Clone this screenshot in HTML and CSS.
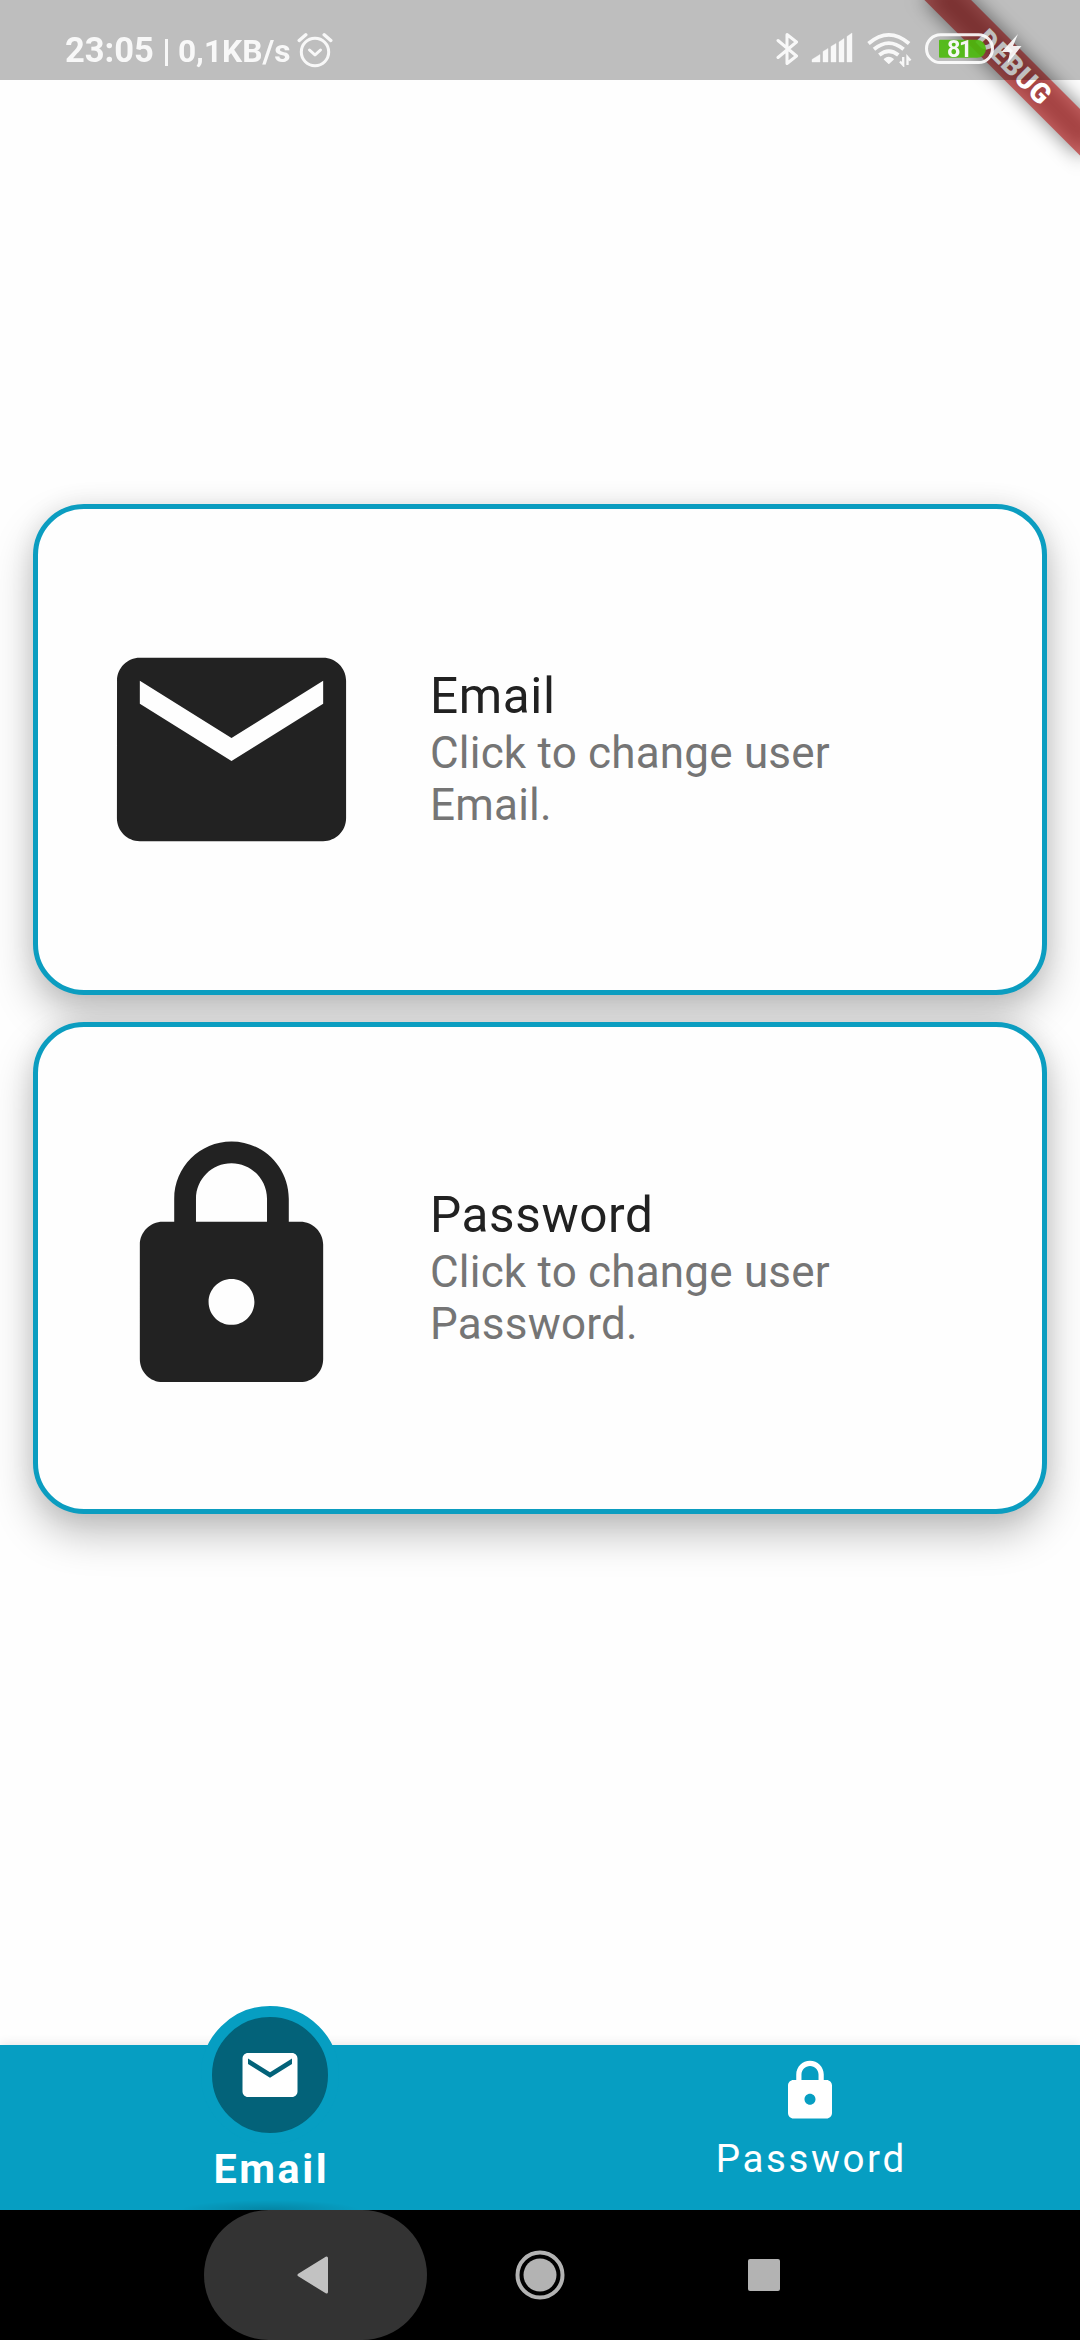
FILE: index.html
```html
<!DOCTYPE html>
<html lang="en">
<head>
<meta charset="utf-8">
<title>Account settings</title>
<link rel="stylesheet" href="styles.css">
</head>
<body>
<div class="screen">
  <svg class="debug-banner" width="200" height="200" viewBox="0 0 200 200">
    <defs>
      <filter id="soft" x="-30%" y="-150%" width="160%" height="400%"><feGaussianBlur stdDeviation="10"/></filter>
    </defs>
    <g transform="translate(200 0) rotate(45)">
      <rect x="-110" y="77" width="220" height="33" fill="#000" fill-opacity=".5" filter="url(#soft)"/>
      <rect x="-110" y="77" width="220" height="33" fill="#b71c1c" fill-opacity=".63"/>
      <text class="debug-text" x="1" y="103.5" text-anchor="middle">DEBUG</text>
    </g>
  </svg>

  <header class="status-bar">
    <div class="status-left">
      <span class="clock">23:05</span>
      <span class="divider"></span>
      <span class="speed">0,1KB/s</span>
      <svg class="alarm" width="36" height="36" viewBox="0 0 36 36" fill="none" stroke="#fff" stroke-linecap="round" stroke-linejoin="round">
        <circle cx="18" cy="20" r="13.700" stroke-width="3"/>
        <path d="M12.500 18l5.500 5 5.500-5" stroke-width="3"/>
        <path d="M2.200 8.500l6.600-5.700M33.800 8.500l-6.600-5.700" stroke-width="3.400"/>
      </svg>
    </div>
    <svg class="status-right" width="256" height="36" viewBox="0 0 256 36">
      <path d="M2 9.500L20.500 25 11 32.500V3.500L20.500 11 2 26.500" fill="none" stroke="#fff" stroke-width="3" stroke-linejoin="round" stroke-linecap="round"/>
      <path d="M36 31v-2.500l8-5V31zM47 31V20.500l5-3V31zM55 31V15.500l5-3V31zM63 31V11l5-3.500V31zM71 31V5.500L76 2v29z" fill="#fff" stroke="#fff" stroke-width=".4" stroke-linejoin="round"/>
      <g fill="none" stroke="#fff" stroke-width="3.800">
        <path d="M92.500 12.500q20.300-17.300 40.600 0"/>
        <path d="M98 18.300q14.800-12.300 29.600 0"/>
        <path d="M103.300 24q9.500-7.600 19 0"/>
      </g>
      <path d="M108.500 28.300q4.200-3.600 8.600 0l-4.300 3.900z" fill="#fff" stroke="#fff" stroke-width="1.500" stroke-linejoin="round"/>
      <path d="M127.200 26v8l-3.200-3.500M131.500 34v-8l3 3.500" fill="none" stroke="#fff" stroke-width="2.300"/>
      <path d="M166 8h37a9 9 0 0 1 9 9 9 9 0 0 1-9 9h-37a1 1 0 0 1-1-1V9a1 1 0 0 1 1-1z" transform="translate(-2 .8)" fill="#4cbb0c"/>
      <rect x="150.500" y="3.800" width="66" height="27.800" rx="13.900" fill="none" stroke="#fff" stroke-width="3"/>
      <text class="battery-text" x="171" y="26.200">81</text>
      <path d="M242 3l-16.500 18h8.500L231.500 32.500 245.500 15h-8.500z" fill="#fff"/>
    </svg>
  </header>

  <main class="content">
    <section class="card">
      <svg class="card-icon" viewBox="0 0 24 24"><path d="M20 4H4c-1.100 0-1.990.9-1.990 2L2 18c0 1.100.9 2 2 2h16c1.100 0 2-.9 2-2V6c0-1.100-.9-2-2-2zm0 4l-8 5-8-5V6l8 5 8-5v2z"/></svg>
      <div class="card-text">
        <h2>Email</h2>
        <p>Click to change user<br>Email.</p>
      </div>
    </section>
    <section class="card">
      <svg class="card-icon" viewBox="0 0 24 24"><path d="M18 8h-1V6c0-2.760-2.240-5-5-5S7 3.240 7 6v2H6c-1.100 0-2 .9-2 2v10c0 1.100.9 2 2 2h12c1.100 0 2-.9 2-2V10c0-1.100-.9-2-2-2zm-6 9c-1.100 0-2-.9-2-2s.9-2 2-2 2 .9 2 2-.9 2-2 2zm3.100-9H8.900V6c0-1.710 1.390-3.100 3.100-3.100 1.710 0 3.100 1.390 3.100 3.100v2z"/></svg>
      <div class="card-text">
        <h2>Password</h2>
        <p>Click to change user<br>Password.</p>
      </div>
    </section>
  </main>

  <nav class="tabs">
    <div class="tab active">
      <div class="bubble">
        <svg class="tab-icon" viewBox="0 0 24 24"><path d="M20 4H4c-1.100 0-1.990.9-1.990 2L2 18c0 1.100.9 2 2 2h16c1.100 0 2-.9 2-2V6c0-1.100-.9-2-2-2zm0 4l-8 5-8-5V6l8 5 8-5v2z"/></svg>
      </div>
      <span class="tab-label">Email</span>
    </div>
    <div class="tab">
      <svg class="tab-icon" viewBox="0 0 24 24"><path d="M18 8h-1V6c0-2.760-2.240-5-5-5S7 3.240 7 6v2H6c-1.100 0-2 .9-2 2v10c0 1.100.9 2 2 2h12c1.100 0 2-.9 2-2V10c0-1.100-.9-2-2-2zm-6 9c-1.100 0-2-.9-2-2s.9-2 2-2 2 .9 2 2-.9 2-2 2zm3.100-9H8.900V6c0-1.710 1.390-3.100 3.100-3.100 1.710 0 3.100 1.390 3.100 3.100v2z"/></svg>
      <span class="tab-label">Password</span>
    </div>
  </nav>

  <footer class="system-nav">
    <div class="key pressed">
      <svg width="32" height="38" viewBox="0 0 32 38"><path d="M2 19L29.500 2v34z" fill="#c2c2c2" stroke="#c2c2c2" stroke-width="3" stroke-linejoin="round"/></svg>
    </div>
    <div class="key">
      <svg width="50" height="50" viewBox="0 0 50 50"><circle cx="25" cy="25" r="22.500" fill="none" stroke="#b3b3b3" stroke-width="4"/><circle cx="25" cy="25" r="16.500" fill="#b3b3b3"/></svg>
    </div>
    <div class="key"><span class="recents"></span></div>
  </footer>
</div>
</body>
</html>
```
FILE: styles.css
```css
* { box-sizing: border-box; }

body {
  margin: 0;
  font-family: Roboto, "Liberation Sans", sans-serif;
}

.screen {
  position: relative;
  display: flex;
  flex-direction: column;
  width: 1080px;
  height: 2340px;
  overflow: hidden;
  background: #fefefe;
}

/* Status bar: translucent, above the corner banner */
.debug-banner {
  position: absolute;
  top: 0;
  right: 0;
}

.debug-text {
  fill: #fff;
  font-size: 28px;
  font-weight: 900;
  letter-spacing: .7px;
}

.status-bar {
  position: relative;
  display: flex;
  justify-content: space-between;
  height: 80px;
  padding: 31px 48px 0 65px;
  background: rgba(0, 0, 0, .25);
  color: #fff;
}

.status-left {
  display: flex;
  align-items: baseline;
  height: 40px;
  margin-top: -1px;
  line-height: 40px;
  font-weight: 700;
  opacity: .9;
}

.clock { font-size: 34.500px; }

.divider {
  align-self: flex-start;
  width: 3px;
  height: 27px;
  margin: 9px 10px 0 11px;
  background: #fff;
}

.speed { font-size: 31.700px; }

.alarm {
  align-self: flex-start;
  margin: 2px 0 0 7px;
}

.status-right {
  opacity: .9;
}

.battery-text {
  fill: #fff;
  font-size: 23.500px;
  font-weight: 700;
  letter-spacing: -1.500px;
}

/* Cards */
.content {
  display: flex;
  flex: 1;
  flex-direction: column;
  gap: 27.500px;
  padding: 423.500px 33px 0;
}

.card {
  display: flex;
  align-items: center;
  gap: 61.500px;
  height: 491.300px;
  padding-left: 55.500px;
  border: 5.500px solid #0b9dc0;
  border-radius: 51px;
  background: #fefefe;
  box-shadow: 0 20px 40px rgba(0, 0, 0, .25), 0 0 24px rgba(0, 0, 0, .08);
}

.card-icon {
  width: 275px;
  height: 275px;
  fill: #222;
}

.card-text h2 {
  margin: 0 0 2px;
  color: #212121;
  font-size: 49.500px;
  font-weight: 400;
  line-height: 58px;
  letter-spacing: .6px;
}

.card-text p {
  margin: 0;
  color: #757575;
  font-size: 44px;
  line-height: 52px;
  letter-spacing: .2px;
}

/* Tabs */
.tabs {
  position: relative;
  display: flex;
  height: 165px;
  background: #069ec2;
  box-shadow: 0 0 11px rgba(0, 0, 0, .12);
}

.tab {
  display: flex;
  flex: 1;
  flex-direction: column;
  align-items: center;
  padding-top: 13px;
  color: #fff;
}

.tab-icon {
  width: 66px;
  height: 66px;
  fill: #fff;
}

.tab-label {
  margin-top: 12px;
  padding-left: 2.600px;
  font-size: 38.500px;
  line-height: 45px;
  letter-spacing: 2.600px;
}

.active {
  padding-top: 0;
  background: radial-gradient(ellipse 90px 10px at 50% 100%, rgba(0, 0, 0, .16), transparent);
}

.bubble {
  display: flex;
  align-items: center;
  justify-content: center;
  width: 138px;
  height: 138px;
  margin-top: -39px;
  border: 11px solid #069ec2;
  border-radius: 50%;
  background: #036279;
}

.active .tab-label {
  margin-top: 1px;
  font-size: 41.250px;
  font-weight: 700;
  line-height: 48px;
}

/* System navigation */
.system-nav {
  position: relative;
  display: flex;
  justify-content: center;
  gap: 1px;
  height: 130px;
  background: #000;
}

.key {
  display: flex;
  align-items: center;
  justify-content: center;
  width: 223px;
  height: 130px;
}

.pressed {
  margin-left: -1px;
  padding-right: 6px;
  border-radius: 65px;
  background: #333;
}

.recents {
  width: 32px;
  height: 32px;
  border-radius: 2px;
  background: #b3b3b3;
}
```
